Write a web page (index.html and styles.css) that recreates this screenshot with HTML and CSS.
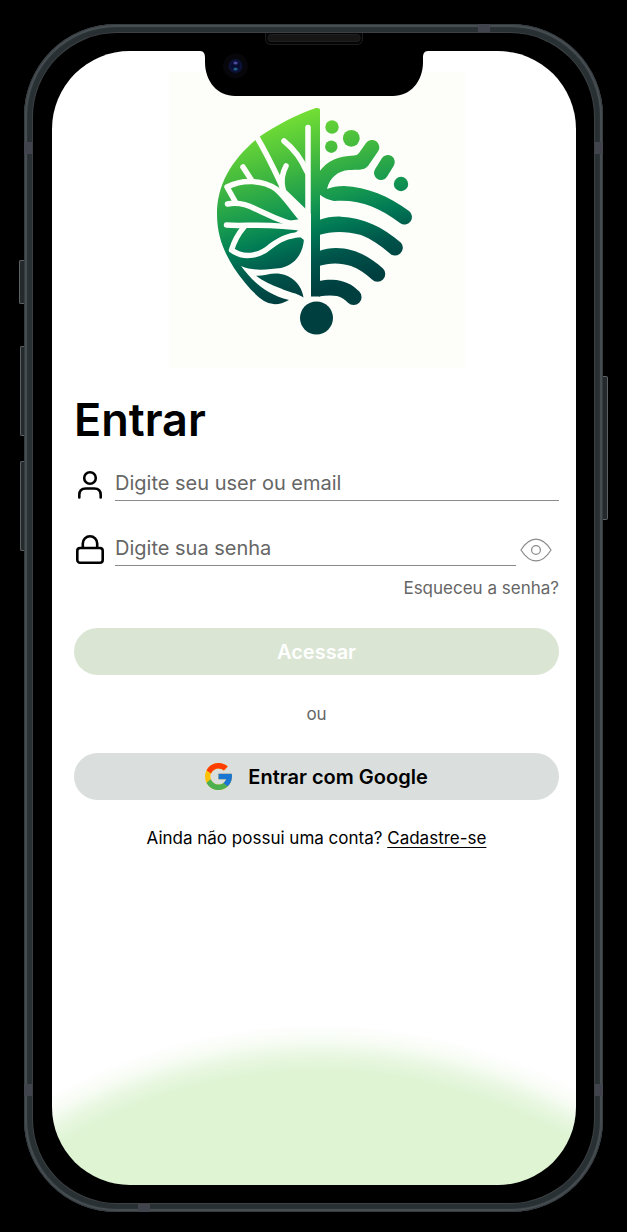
FILE: index.html
```html
<!DOCTYPE html>
<html lang="pt-BR">
<head>
<meta charset="utf-8">
<meta name="viewport" content="width=device-width, initial-scale=1">
<title>Entrar</title>
<link rel="stylesheet" href="styles.css">
</head>
<body>
<div class="phone">
  <span class="key key-mute"></span>
  <span class="key key-up"></span>
  <span class="key key-down"></span>
  <span class="key key-power"></span>
  <span class="band band-left-top"></span>
  <span class="band band-right-top"></span>
  <span class="band band-left-bottom"></span>
  <span class="band band-right-bottom"></span>
  <span class="band band-top"></span>
  <span class="band band-bottom"></span>
  <div class="bezel">
    <svg class="notch" viewBox="0 1 232 64" aria-hidden="true">
      <path d="M2 19V1H230V19C226 19 225 22 225 26V30C225 50 212 64 195 64H37C20 64 7 50 7 30V26C7 22 6 19 2 19Z" fill="#000"/>
      <path d="M67.500 0V7Q67.500 12.500 73 12.500H159Q164.500 12.500 164.500 7V0" fill="#050505" stroke="#1b1c1d"/>
      <rect x="70" y="2.500" width="92" height="7" rx="3" fill="#161616" stroke="#1e1e1e"/>
      <circle cx="37.500" cy="34" r="12.500" fill="#07060b"/>
      <circle cx="37.500" cy="34" r="7" fill="#0c1238"/>
      <circle cx="37.500" cy="34" r="4.500" fill="#080c30"/>
      <ellipse cx="37.500" cy="31" rx="2.200" ry="1.600" fill="#4a4a9c"/>
      <ellipse cx="37.500" cy="37" rx="2.200" ry="1.600" fill="#1f5c86"/>
    </svg>
    <main class="screen">
      <svg class="logo" viewBox="168 72 296 296" role="img" aria-label="Logo">
        <defs>
          <linearGradient id="leaf" gradientUnits="userSpaceOnUse" x1="268" y1="112" x2="322" y2="290">
            <stop offset="0" stop-color="#7de632"/>
            <stop offset=".3" stop-color="#45bb3e"/>
            <stop offset=".54" stop-color="#159850"/>
            <stop offset=".68" stop-color="#007a55"/>
            <stop offset=".84" stop-color="#00544a"/>
            <stop offset="1" stop-color="#003f40"/>
          </linearGradient>
        </defs>
        <rect x="168" y="72" width="296" height="296" fill="#fdfefa"/>
        <g fill="url(#leaf)">
          <path d="M319 110Q319 107.500 315 108C296 114 276 125 258 137C231 159 216 184 216 214C216 236 223 252 233 268C243 283 254 295 263 301Q274 308 288 300C265 294 252 282 240 266C254 272 268 269 280 268C296 264 302 252 303 239V220H310V296.500H319Z"/>
          <path d="M255 275.700C262 276 269 273 277 273.500C292 275 301 286 302.500 297.500C296 293 287 292 280 288.500C270 285 262 281 255 275.700Z"/>
          <path d="M318 172C326 161 337 156 353 155.500Q356 155.500 358 153L365 143A7.300 7.300 0 0 1 377 151.500L367 166C363 171 355 169.500 348 170C337 171 329 177 326 189C331 187 336 186 343 186C366 187 388 196 408 211A7 7 0 0 1 399 223C378 207 358 199 333 201C328 200 323 198 318 194Z"/>
          <path d="M318 220C325 217.500 333 216.300 340 216.700C362 217.500 382 227 400 242.700A7.200 7.200 0 0 1 388 252.700C379 245 370 239 360 235C345 231 331 231 318 235Z"/>
          <path d="M318 251C323 249 329 248 335 248C354 248 369 257 382 268.500A7.500 7.500 0 0 1 371 279.500C365 274 358 269 350 266C340 262.500 328 262.500 318 266Z"/>
          <path d="M318 281C323 280 327 279.500 331.700 279.700C342 280 351 284 358.300 291.500A7.300 7.300 0 0 1 347 302.700C344 299.500 340 297 336 296C330 295 324 295.500 318 296.500Z"/>
          <path d="M386.800 162L380 173" fill="none" stroke="url(#leaf)" stroke-width="14" stroke-linecap="round"/>
          <circle cx="331" cy="127" r="6.700"/>
          <circle cx="350.300" cy="138.300" r="8.400"/>
          <circle cx="330.300" cy="146.700" r="6.200"/>
          <circle cx="400" cy="184" r="7.200"/>
          <circle cx="315.500" cy="318" r="16.500"/>
        </g>
        <g fill="none" stroke="#fdfefa" stroke-width="5.500" stroke-linecap="round" stroke-linejoin="round">
          <path d="M307 127.500V298"/>
          <path d="M255.500 136.500C266 154 273 169 280 184C284 200 294 208 306 222"/>
          <path d="M283 141Q298 153 306 172"/>
          <path d="M285 166Q279 177 282 190"/>
          <path d="M242 167L251 181"/>
          <path d="M235 203L226 187C242 179 262 180 275 189C286 198 293 212 306 225"/>
          <path d="M226.500 204C250 199 262 219 306 228"/>
          <path d="M225.500 225C245 227 262 222 306 229"/>
          <path d="M243 227C236 235 233 242 230.500 250C244 260 260 255 270 246C282 237 290 235 305 234"/>
        </g>
        <path d="M281 186L310 214V240H303L294 233L300 228L286 221L300 219Z" fill="#fdfefa"/>
      </svg>

      <form class="login">
        <h1 class="title">Entrar</h1>

        <div class="field">
          <label class="field-icon" for="user" aria-label="Usuário ou email">
            <svg viewBox="0 0 32 32" width="32" height="32" fill="none" stroke="#000" stroke-width="2.600">
              <circle cx="16" cy="9" r="5.800"/>
              <path d="M5.300 28.500V26Q5.300 19.500 11.800 19.500H20.200Q26.700 19.500 26.700 26V28.500" stroke-linecap="round"/>
            </svg>
          </label>
          <input class="input" id="user" type="text" placeholder="Digite seu user ou email">
        </div>

        <div class="field">
          <label class="field-icon" for="password" aria-label="Senha">
            <svg viewBox="0 0 32 32" width="32" height="32" fill="none" stroke="#000" stroke-width="2.600">
              <rect x="3.300" y="14" width="25.400" height="14.700" rx="2.800"/>
              <path d="M8.800 14V9.500A7.200 7.200 0 0 1 23.200 9.500V14"/>
            </svg>
          </label>
          <input class="input" id="password" type="password" placeholder="Digite sua senha">
          <button class="reveal" type="button" aria-label="Mostrar senha">
            <svg viewBox="0 0 32 24" width="32" height="24" fill="none" stroke="#8a8a8a" stroke-width="1.200">
              <path d="M1 12C10 -2.500 22 -2.500 31 12C22 26.500 10 26.500 1 12Z"/>
              <circle cx="16" cy="12" r="4.400"/>
            </svg>
          </button>
        </div>

        <a class="forgot" href="#">Esqueceu a senha?</a>
        <button class="button button-primary" type="submit">Acessar</button>
        <p class="divider">ou</p>
        <button class="button button-google" type="button">
          <svg viewBox="4 4 40 40" width="27" height="27" aria-hidden="true">
            <path fill="#FFC107" d="M43.600 20.100H42V20H24v8h11.300C33.700 32.700 29.200 36 24 36c-6.600 0-12-5.400-12-12s5.400-12 12-12c3.100 0 5.800 1.200 8 3l5.700-5.700C34 6.100 29.300 4 24 4 13 4 4 13 4 24s9 20 20 20 20-9 20-20c0-1.300-.1-2.700-.4-3.900z"/>
            <path fill="#FF3D00" d="M6.300 14.700l6.600 4.800C14.700 15.100 19 12 24 12c3.100 0 5.800 1.200 8 3l5.700-5.700C34 6.100 29.300 4 24 4 16.300 4 9.700 8.300 6.300 14.700z"/>
            <path fill="#4CAF50" d="M24 44c5.200 0 9.900-2 13.400-5.200l-6.200-5.200C29.200 35.100 26.700 36 24 36c-5.200 0-9.600-3.300-11.300-7.900l-6.500 5C9.500 39.600 16.200 44 24 44z"/>
            <path fill="#1976D2" d="M43.600 20.100H42V20H24v8h11.300c-.8 2.200-2.200 4.200-4.100 5.600l6.200 5.200C37 39.200 44 34 44 24c0-1.300-.1-2.700-.4-3.900z"/>
          </svg>
          Entrar com Google
        </button>
        <p class="signup">Ainda não possui uma conta? <a class="signup-link" href="#">Cadastre-se</a></p>
      </form>
    </main>
  </div>
</div>
</body>
</html>
```
FILE: styles.css
```css
* {
  box-sizing: border-box;
}

body {
  margin: 0;
  min-height: 100vh;
  display: flex;
  padding: 24px 24px 20px;
  background: #000;
  color: #000;
  font-family: Inter, "Noto Sans", sans-serif;
}

.phone {
  position: relative;
  flex: 1;
  display: flex;
  padding: 9px;
  border-radius: 92px;
  background: #293034;
  box-shadow: inset 0 0 1px 1px #33393d, inset 0 0 1px 3px #4a5155;
}

.bezel {
  position: relative;
  flex: 1;
  display: flex;
  padding: 18px 18px 18px 19px;
  border-radius: 84px;
  background: #000;
  box-shadow: 0 0 0 1px #3c4042;
}

.notch {
  position: absolute;
  top: 0;
  left: 50%;
  width: 232px;
  height: 64px;
  margin-left: -116px;
}

.screen {
  flex: 1;
  min-width: 0;
  padding: 21px 17px 32px 22px;
  border-radius: 78px;
  background: radial-gradient(circle at 51% calc(100% + 385px), #def4d3 498px, #e7f7df 513px, #f7fcf4 530px, #fff 546px);
}

.logo {
  display: block;
  width: 296px;
  max-width: 100%;
  margin: 0 auto;
}

.login {
  display: flex;
  flex-direction: column;
  padding-top: 26px;
}

.title {
  margin: 0 0 15px;
  font-size: 45px;
  line-height: 52px;
  font-weight: 600;
}

.field {
  display: flex;
  align-items: flex-end;
  height: 40px;
  margin-bottom: 25px;
}

.field-icon {
  display: flex;
  width: 41px;
  flex: none;
}

.input {
  flex: 1;
  min-width: 0;
  height: 40px;
  padding: 4px 0 0;
  border: 0;
  border-bottom: 1px solid #8a8a8a;
  border-radius: 0;
  background: none;
  color: #000;
  font-family: inherit;
  font-size: 20px;
}

.input::placeholder {
  color: #666;
  opacity: 1;
}

.reveal {
  display: flex;
  flex: none;
  margin-right: 7px;
  padding: 0 0 4px 4px;
  border: 0;
  background: none;
  cursor: pointer;
}

.forgot {
  align-self: flex-end;
  margin-top: -15px;
  color: #666;
  font-size: 17px;
  line-height: 24px;
  text-decoration: none;
}

.button {
  display: flex;
  align-items: center;
  justify-content: center;
  gap: 16px;
  height: 47px;
  padding: 0 16px;
  border: 0;
  border-radius: 24px;
  font-family: inherit;
  font-size: 20px;
  font-weight: 600;
  cursor: pointer;
}

.button-primary {
  margin-top: 28px;
  background: #dae5d3;
  color: #fff;
}

.button-google {
  background: #dadedd;
  color: #000;
}

.divider {
  margin: 27px 0;
  color: #666;
  font-size: 17px;
  line-height: 24px;
  text-align: center;
}

.signup {
  margin: 26px 0 0;
  font-size: 17px;
  line-height: 24px;
  text-align: center;
}

.signup-link {
  color: inherit;
  text-underline-offset: 3px;
}

.key {
  position: absolute;
  left: -4px;
  width: 4px;
  border: 1px solid #5c6164;
  border-right: 0;
  border-radius: 2px 0 0 2px;
  background: #24292c;
}

.key-mute {
  top: 236px;
  left: -5px;
  width: 5px;
  height: 44px;
}

.key-up {
  top: 322px;
  height: 90px;
}

.key-down {
  top: 437px;
  height: 90px;
}

.key-power {
  top: 352px;
  left: auto;
  right: -5px;
  width: 5px;
  height: 144px;
  border: 1px solid #5c6164;
  border-left: 0;
  border-radius: 0 2px 2px 0;
}

.band {
  position: absolute;
  width: 8px;
  height: 12px;
  background: #41444d;
}

.band-left-top {
  top: 118px;
  left: 0;
}

.band-right-top {
  top: 118px;
  right: 0;
}

.band-left-bottom {
  bottom: 116px;
  left: 0;
}

.band-right-bottom {
  bottom: 116px;
  right: 0;
}

.band-top {
  top: 0;
  right: 113px;
  width: 12px;
  height: 8px;
}

.band-bottom {
  bottom: 0;
  left: 114px;
  width: 12px;
  height: 8px;
}
```
